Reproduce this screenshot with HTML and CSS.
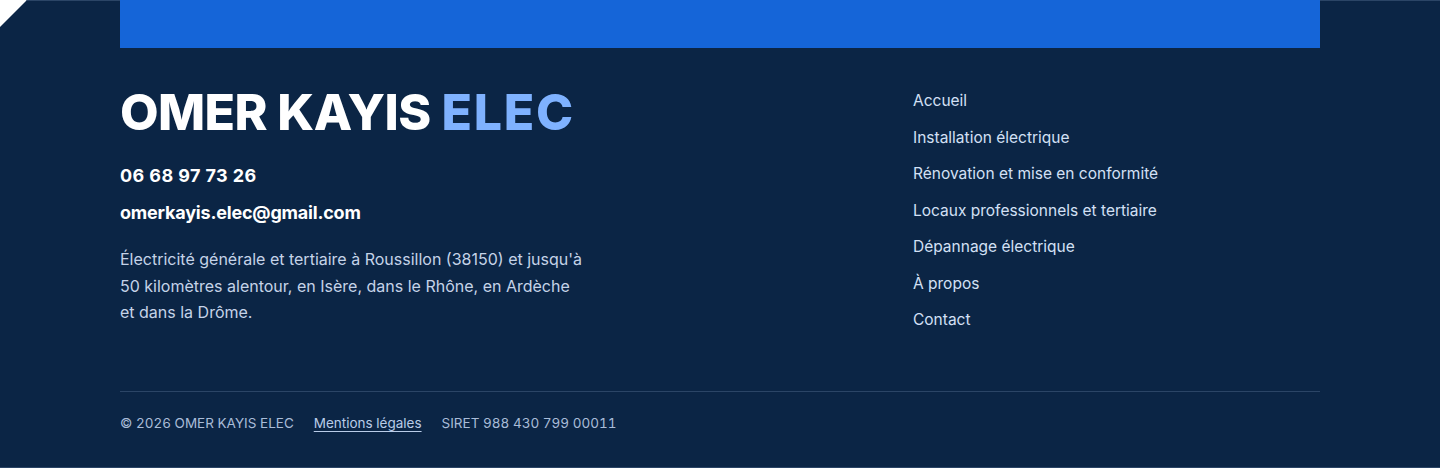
FILE: index.html
```html
<!DOCTYPE html>
<html lang="fr">
<head>
<meta charset="utf-8">
<title>OMER KAYIS ELEC</title>
<link rel="stylesheet" href="styles.css">
</head>
<body>
<footer class="footer">
  <div class="container">
    <div class="accent-bar"></div>
    <div class="main">
      <div class="brand">
        <div class="logo"><span class="logo-main">OMER KAYIS</span> <span class="logo-accent">ELEC</span></div>
        <a class="phone" href="#">06 68 97 73 26</a>
        <a class="email" href="#">omerkayis.elec@gmail.com</a>
        <p class="desc">Électricité générale et tertiaire à Roussillon (38150) et jusqu'à 50 kilomètres alentour, en Isère, dans le Rhône, en Ardèche et dans la Drôme.</p>
      </div>
      <nav class="nav">
        <a href="#">Accueil</a>
        <a href="#">Installation électrique</a>
        <a href="#">Rénovation et mise en conformité</a>
        <a href="#">Locaux professionnels et tertiaire</a>
        <a href="#">Dépannage électrique</a>
        <a href="#">À propos</a>
        <a href="#">Contact</a>
      </nav>
    </div>
    <div class="bottom">
      <span>© 2026 OMER KAYIS ELEC</span>
      <a class="legal" href="#">Mentions légales</a>
      <span>SIRET 988 430 799 00011</span>
    </div>
  </div>
</footer>
</body>
</html>
```
FILE: styles.css
```css
* { box-sizing: border-box; }
html, body { margin: 0; padding: 0; background: #ffffff; }
body { font-family: Inter, "Noto Sans", sans-serif; }
a { text-decoration: none; color: inherit; }

.footer {
  height: 468px;
  background: #0b2545;
  border-top: 1px solid #2b4566;
  border-bottom: 1px solid #2b4566;
  clip-path: polygon(27px 0, 100% 0, 100% 100%, 0 100%, 0 27px);
  color: #ffffff;
}
.container {
  width: 1200px;
  margin: 0 auto;
}
.accent-bar {
  height: 48px;
  background: #1565d8;
  margin-top: -1px;
}
.main {
  display: grid;
  grid-template-columns: 1fr 407px;
  padding-top: 38px;
  height: 343px;
}
.logo {
  font-size: 50px;
  font-weight: 800;
  line-height: 52px;
  white-space: nowrap;
}
.logo-main { color: #ffffff; letter-spacing: -0.012em; }
.logo-accent { color: #7fb2ff; letter-spacing: 0.035em; }
.phone, .email {
  display: block;
  font-weight: 700;
  color: #ffffff;
}
.phone { font-size: 18px; line-height: 24px; margin-top: 26px; letter-spacing: 0.4px; }
.email { font-size: 18px; line-height: 24px; margin-top: 13px; letter-spacing: -0.2px; }
.desc {
  margin: 21px 0 0;
  width: 466px;
  font-size: 16px;
  line-height: 26.5px;
  color: #c5d3e8;
}
.nav {
  display: flex;
  flex-direction: column;
  gap: 14.5px;
  padding-top: 4px;
}
.nav a {
  font-size: 15.5px;
  line-height: 22px;
  color: #d3e0f5;
}
.bottom {
  border-top: 1px solid #2b4566;
  display: flex;
  align-items: center;
  gap: 20px;
  height: 63px;
  font-size: 13.5px;
  font-variant-numeric: tabular-nums;
  color: #a9bcd8;
}
.legal {
  text-decoration: underline;
  text-underline-offset: 3px;
  color: #b9cce8;
}
```
